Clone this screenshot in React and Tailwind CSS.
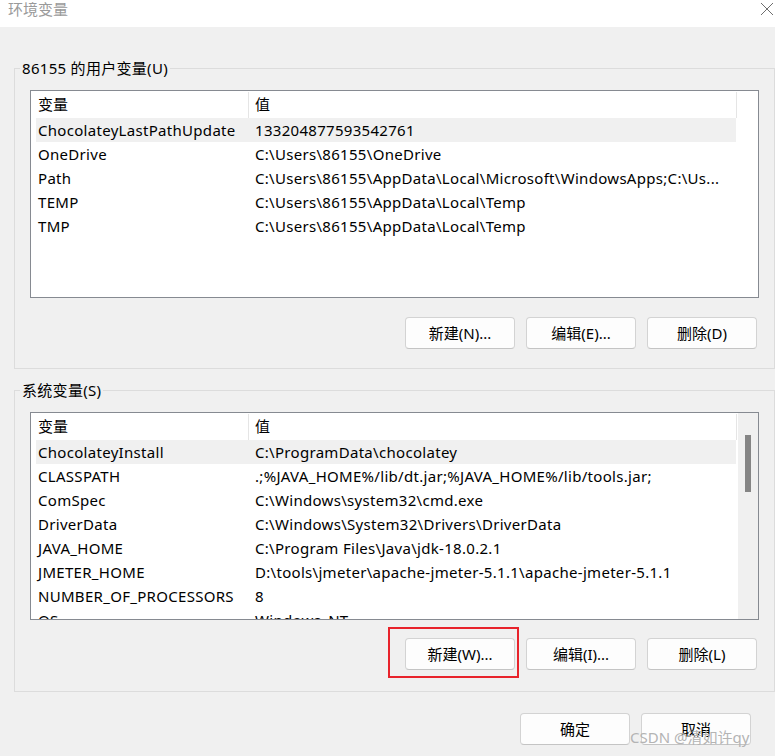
import React from 'react';

const userVars = [
  ['ChocolateyLastPathUpdate', '133204877593542761'],
  ['OneDrive', 'C:\\Users\\86155\\OneDrive'],
  ['Path', 'C:\\Users\\86155\\AppData\\Local\\Microsoft\\WindowsApps;C:\\Us...'],
  ['TEMP', 'C:\\Users\\86155\\AppData\\Local\\Temp'],
  ['TMP', 'C:\\Users\\86155\\AppData\\Local\\Temp'],
];

const sysVars = [
  ['ChocolateyInstall', 'C:\\ProgramData\\chocolatey'],
  ['CLASSPATH', '.;%JAVA_HOME%/lib/dt.jar;%JAVA_HOME%/lib/tools.jar;'],
  ['ComSpec', 'C:\\Windows\\system32\\cmd.exe'],
  ['DriverData', 'C:\\Windows\\System32\\Drivers\\DriverData'],
  ['JAVA_HOME', 'C:\\Program Files\\Java\\jdk-18.0.2.1'],
  ['JMETER_HOME', 'D:\\tools\\jmeter\\apache-jmeter-5.1.1\\apache-jmeter-5.1.1'],
  ['NUMBER_OF_PROCESSORS', '8'],
  ['OS', 'Windows_NT'],
];

const Button = ({ children }) => (
  <button
    type="button"
    className="w-[110px] h-[32px] rounded-[4px] border border-[#d3d3d3] border-b-[#c4c4c4] bg-[#fdfdfd] text-[15px] leading-[20px] text-black"
  >
    {children}
  </button>
);

const VarList = ({ rows, scroll }) => (
  <div className="ml-[15px] w-[729px] h-[208px] border border-[#868a91] bg-white flex overflow-hidden">
    <div className="pl-[5px] w-[706px] shrink-0">
      {/* header */}
      <div className="flex h-[27px] items-center">
        <div className="w-[212px] pl-[2px] h-full flex items-center">变量</div>
        <div className="w-px h-[26px] self-end bg-[#e5e5e5]" />
        <div className="flex-1 pl-[6px] h-full flex items-center">值</div>
        <div className="w-px h-[26px] self-end bg-[#e5e5e5]" />
      </div>
      {rows.map(([name, value], i) => (
        <div
          key={name}
          className={`flex h-[24px] items-center w-[700px] whitespace-nowrap tracking-[0.3px] ${i === 0 ? 'bg-[#f0f0f0]' : ''}`}
        >
          <div className="w-[213px] pl-[2px] overflow-hidden">{name}</div>
          <div className="flex-1 pl-[6px] overflow-hidden">{value}</div>
        </div>
      ))}
    </div>
    {scroll && (
      <div className="ml-[1px] w-[21px] h-full bg-[#f0f0f0] pt-[22px]">
        <div className="ml-[7px] w-[6px] h-[57px] bg-[#858585]" />
      </div>
    )}
  </div>
);

const Group = ({ label, children, className }) => (
  <div className={`ml-[14px] w-[761px] border border-[#dcdcdc] ${className}`}>
    <div className="-mt-[11px] ml-[5px] w-fit px-[2px] bg-[#f0f0f0] h-[20px] leading-[20px] tracking-[0.3px]">{label}</div>
    {children}
  </div>
);

export default function App() {
  return (
    <div className="relative w-[775px] h-[756px] overflow-hidden bg-[#f0f0f0] text-[15px] text-black font-['Noto_Sans','Noto_Sans_CJK_SC',sans-serif]">
      {/* title bar */}
      <div className="h-[27px] bg-white flex items-start justify-between">
        <span className="ml-[8px] mt-[-1px] text-[15px] leading-[20px] text-[#9a9a9a]">环境变量</span>
        <svg width="14" height="14" viewBox="0 0 14 14" className="mt-[2px] mr-[1px]" stroke="#6e6e6e" strokeWidth="1">
          <line x1="1" y1="1" x2="13" y2="13" />
          <line x1="13" y1="1" x2="1" y2="13" />
        </svg>
      </div>

      <Group label="86155 的用户变量(U)" className="mt-[41px] h-[301px]">
        <div className="mt-[12px]">
          <VarList rows={userVars} />
        </div>
        <div className="mt-[19px] pr-[17px] flex justify-end gap-[11px]">
          <Button>新建(N)...</Button>
          <Button>编辑(E)...</Button>
          <Button>删除(D)</Button>
        </div>
      </Group>

      <Group label="系统变量(S)" className="mt-[21px] h-[302px]">
        <div className="mt-[12px]">
          <VarList rows={sysVars} scroll />
        </div>
        <div className="mt-[18px] pr-[17px] flex justify-end gap-[11px]">
          <Button>新建(W)...</Button>
          <Button>编辑(I)...</Button>
          <Button>删除(L)</Button>
        </div>
      </Group>

      <div className="mt-[21px] pr-[24px] flex justify-end gap-[11px]">
        <Button>确定</Button>
        <Button>取消</Button>
      </div>

      {/* annotation box */}
      <div className="absolute left-[388px] top-[627px] w-[131px] h-[51px] border-2 border-[#e8232b]" />

      {/* watermark */}
      <div className="absolute left-[630px] top-[727px] leading-[20px] text-[15px] text-[#b4b4b4] whitespace-nowrap">
        CSDN @清如许qy
      </div>
    </div>
  );
}
